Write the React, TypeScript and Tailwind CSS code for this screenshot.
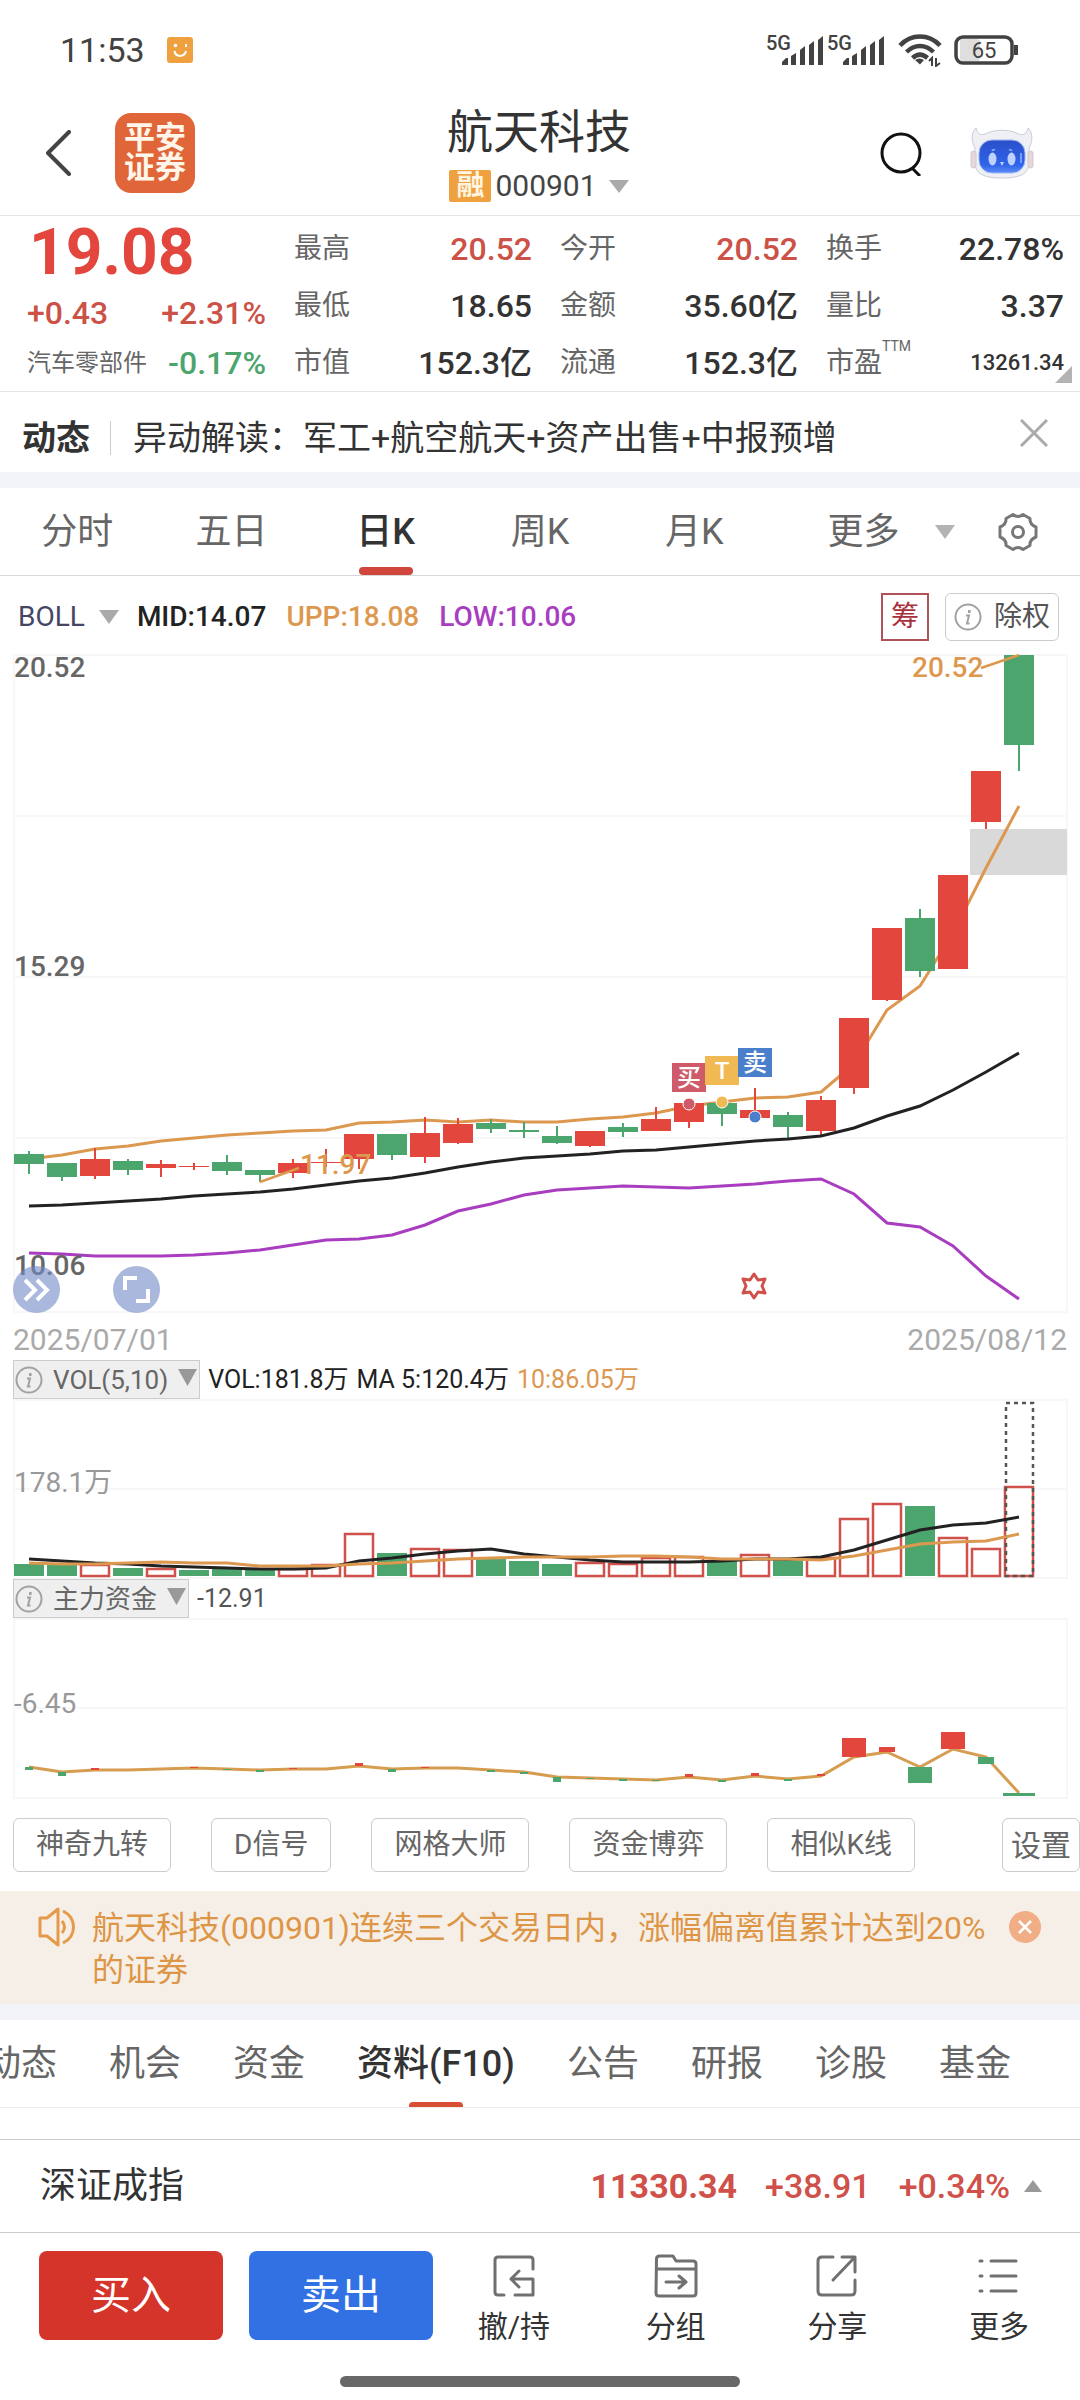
import { useState, type ReactNode } from "react";

const RED = "#e2463c";
const GREEN = "#4ca56d";
const ORANGE = "#dd9850";
const BLACK = "#222222";
const PURPLE = "#a93dc0";
const GRID = "#f7f7f8";

const STEP = 33;
const x = (i: number) => 29 + i * STEP;

// up, high, body top, body bottom, low
type Candle = [number, number, number, number, number];

const candles: Candle[] = [
  [0, 1151, 1154, 1164, 1174],
  [0, 1163, 1163, 1177, 1181],
  [1, 1148, 1159, 1176, 1179],
  [0, 1159, 1161, 1170, 1175],
  [1, 1160, 1164, 1168, 1177],
  [1, 1163, 1166, 1167, 1170],
  [0, 1155, 1162, 1171, 1175],
  [0, 1170, 1170, 1175, 1182],
  [1, 1159, 1163, 1173, 1178],
  [1, 1149, 1162, 1163, 1167],
  [1, 1134, 1134, 1159, 1169],
  [0, 1134, 1134, 1155, 1160],
  [1, 1117, 1133, 1157, 1163],
  [1, 1118, 1124, 1143, 1144],
  [0, 1119, 1123, 1129, 1133],
  [0, 1122, 1130, 1132, 1138],
  [0, 1126, 1136, 1143, 1144],
  [1, 1131, 1131, 1146, 1147],
  [0, 1123, 1127, 1132, 1137],
  [1, 1107, 1119, 1131, 1131],
  [1, 1103, 1103, 1122, 1128],
  [0, 1103, 1103, 1114, 1126],
  [1, 1088, 1110, 1118, 1118],
  [0, 1112, 1115, 1127, 1138],
  [1, 1096, 1100, 1131, 1135],
  [1, 1018, 1018, 1088, 1094],
  [1, 928, 928, 1000, 1001],
  [0, 909, 918, 971, 977],
  [1, 875, 875, 969, 969],
  [1, 771, 771, 822, 829],
  [0, 655, 655, 745, 771],
];

const upper = [
  1159, 1155, 1149, 1146, 1141, 1138, 1135, 1133, 1131, 1130, 1123, 1122, 1120,
  1122, 1120, 1122, 1122, 1119, 1117, 1113, 1106, 1102, 1098, 1097, 1092, 1064,
  1010, 986, 933, 868, 806,
];
const middle = [
  1206, 1205, 1203, 1201, 1199, 1196, 1194, 1192, 1189, 1185, 1181, 1178, 1173,
  1167, 1162, 1158, 1156, 1154, 1151, 1150, 1147, 1144, 1141, 1139, 1136, 1128,
  1116, 1106, 1090, 1072, 1053,
];
const lower = [
  1253, 1254, 1256, 1256, 1256, 1255, 1253, 1250, 1245, 1240, 1239, 1235, 1225,
  1211, 1204, 1195, 1190, 1188, 1186, 1187, 1188, 1186, 1184, 1181, 1179, 1194,
  1223, 1227, 1246, 1276, 1299,
];

// up, bar top
const volumes: [number, number][] = [
  [0, 1564], [0, 1565], [1, 1564], [0, 1568], [1, 1568], [0, 1570], [0, 1569],
  [0, 1570], [1, 1568], [1, 1564], [1, 1533], [0, 1553], [1, 1548], [1, 1549],
  [0, 1557], [0, 1561], [0, 1564], [1, 1562], [1, 1563], [1, 1557], [1, 1556],
  [0, 1561], [1, 1554], [0, 1559], [1, 1557], [1, 1518], [1, 1503], [0, 1506],
  [1, 1537], [1, 1548], [1, 1486],
];
const ma5 = [
  1559, 1561, 1563, 1564, 1566, 1567, 1568, 1569, 1569, 1568, 1561, 1558, 1554,
  1551, 1549, 1554, 1557, 1560, 1562, 1562, 1562, 1561, 1559, 1559, 1557, 1550,
  1540, 1530, 1525, 1523, 1517,
];
const ma10 = [
  1563, 1564, 1564, 1563, 1562, 1563, 1563, 1566, 1566, 1566, 1564, 1563, 1561,
  1559, 1558, 1557, 1557, 1557, 1556, 1556, 1557, 1559, 1559, 1559, 1560, 1556,
  1550, 1544, 1542, 1541, 1534,
];

const fund = [
  1767, 1772, 1770, 1770, 1769, 1768, 1769, 1770, 1769, 1769, 1766, 1769, 1768,
  1768, 1770, 1772, 1777, 1778, 1779, 1780, 1777, 1780, 1776, 1779, 1776, 1757,
  1752, 1767, 1749, 1757, 1793,
];
// index, up, top, height, width
const fundBars: [number, number, number, number, number][] = [
  [0, 0, 1767, 3, 8], [1, 0, 1772, 4, 8], [2, 1, 1768, 2, 8], [5, 1, 1767, 1, 8],
  [6, 0, 1769, 1, 8], [7, 0, 1770, 2, 8], [8, 1, 1768, 1, 8], [10, 1, 1763, 3, 8],
  [11, 0, 1769, 3, 8], [12, 1, 1767, 1, 8], [14, 0, 1770, 2, 8], [15, 0, 1772, 2, 8],
  [16, 0, 1777, 5, 8], [17, 0, 1778, 1, 8], [18, 0, 1779, 2, 8], [19, 0, 1780, 1, 8],
  [20, 1, 1774, 3, 8], [21, 0, 1780, 2, 8], [22, 1, 1773, 3, 8], [23, 0, 1779, 2, 8],
  [24, 1, 1774, 2, 8], [25, 1, 1738, 19, 24], [26, 1, 1747, 5, 16], [27, 0, 1767, 16, 24],
  [28, 1, 1732, 17, 24], [29, 0, 1757, 7, 16], [30, 0, 1793, 3, 32],
];

const toPoints = (ys: number[]) => ys.map((y, i) => `${x(i)},${y}`).join(" ");

function Line({ ys, color }: { ys: number[]; color: string }) {
  return <polyline points={toPoints(ys)} fill="none" stroke={color} strokeWidth="3" />;
}

function Caret({ className, up = false }: { className: string; up?: boolean }) {
  return (
    <svg viewBox="0 0 20 14" preserveAspectRatio="none" className={className} fill="currentColor">
      <path d={up ? "M0 14 10 0l10 14z" : "M0 0h20L10 14z"} />
    </svg>
  );
}

function InfoIcon() {
  return (
    <svg viewBox="0 0 28 28" className="h-7 w-7 shrink-0" fill="none" stroke="#a2a2a2" strokeWidth="2">
      <circle cx="14" cy="14" r="12.5" />
      <path d="M12 12.5h3l-2 8h2.5" />
      <path d="M15.3 7v3" strokeWidth="2.6" />
    </svg>
  );
}

function Signal() {
  return (
    <div className="flex items-start">
      <span className="-mr-2.5 text-[20px] font-medium leading-4">5G</span>
      <svg viewBox="0 0 44 30" className="h-[30px] w-11" fill="#424242">
        <path d="M1 30v-3l4-4h2v7zM10 30V21l5-3v12zM19 30V15l5-4v19zM28 30V10l5-4v24zM37 30V5l5-4v29z" />
      </svg>
    </div>
  );
}

function StatusBar() {
  return (
    <div className="flex h-[100px] items-center justify-between pl-[60px] pr-[60px] text-[#424242]">
      <div className="flex items-center gap-[22px]">
        <span className="text-[34px]">11:53</span>
        <svg viewBox="0 0 26 26" className="h-[26px] w-[26px]">
          <rect width="26" height="26" rx="3" fill="#efa03f" />
          <circle cx="8.5" cy="8.5" r="1.8" fill="#fff" />
          <path d="M19 7v3" stroke="#fff" strokeWidth="2" />
          <path d="M7.5 14c1 6.5 10 6.5 11.5 0" fill="none" stroke="#fff" strokeWidth="2" />
        </svg>
      </div>
      <div className="flex items-center gap-3">
        <div className="flex items-start gap-0.5">
          <Signal />
          <Signal />
        </div>
        <svg viewBox="0 0 44 34" className="h-[34px] w-11" fill="none" stroke="#424242" strokeWidth="4.5">
          <path d="M2 12.5C13 .5 31 .5 42 12.5" />
          <path d="M8.5 19c8-8 19-8 27 0" />
          <path d="M14.5 25c5-4.5 10-4.5 15 0" />
          <path d="m17 27 5 4.5 4-4.5c-3-2-6-2-9 0z" fill="#424242" stroke="none" />
          <path d="M34 33v-8l-3 3M38 25v8l4-3" strokeWidth="2" />
        </svg>
        <svg viewBox="0 0 66 30" className="h-[30px] w-[66px]">
          <rect x="6" y="4" width="20" height="22" rx="3" fill="#dedede" />
          <rect x="2" y="2" width="56" height="26" rx="7" fill="none" stroke="#424242" strokeWidth="3.5" />
          <path d="M62 10v10" stroke="#424242" strokeWidth="4" />
          <text x="30" y="23" textAnchor="middle" fontSize="22" fill="#424242">
            65
          </text>
        </svg>
      </div>
    </div>
  );
}

function Robot() {
  return (
    <svg viewBox="0 0 64 52" className="h-[52px] w-16">
      <defs>
        <linearGradient id="face" x1="0" y1="0" x2="0" y2="1">
          <stop offset="0" stopColor="#2b4fc9" />
          <stop offset="0.75" stopColor="#2f63ea" />
          <stop offset="1" stopColor="#5b8cf6" />
        </linearGradient>
      </defs>
      <g fill="#eef0f5" stroke="#c9ccd6" strokeWidth="1">
        <path d="M6 1c1 5 4 8 9 6 10-5 24-5 34 0 5 2 8-1 9-6 5 5 5 13 1 20v16c-1 10-9 14-27 14S6 47 5 37V21C1 14 1 6 6 1z" />
        <rect x="1" y="24" width="5" height="17" rx="2.5" fill="#e8d6d8" />
        <rect x="58" y="24" width="5" height="17" rx="2.5" fill="#e8d6d8" />
      </g>
      <rect x="9" y="13" width="46" height="33" rx="13" fill="url(#face)" stroke="#9fb6f3" />
      <ellipse cx="22.5" cy="32" rx="4" ry="6.5" fill="#bdd2ff" />
      <ellipse cx="41.5" cy="32" rx="4" ry="6.5" fill="#bdd2ff" />
      <path d="M22 24q1-2 3-1M39 23q2-1 3 1M51 26v10" fill="none" stroke="#8fb0ff" strokeWidth="1.5" />
      <path d="M30 35h4l-2 4z" fill="#bdd2ff" />
    </svg>
  );
}

function Header() {
  return (
    <header className="grid h-[116px] grid-cols-3 items-center border-b border-[#e6e6e6] pb-3 pl-11 pr-[46px]">
      <div className="flex items-center gap-11">
        <button aria-label="返回">
          <svg viewBox="0 0 27 46" className="h-[46px] w-[27px]" fill="none" stroke="#444" strokeWidth="4">
            <path d="M25 2 4 23l21 21" strokeLinejoin="round" strokeLinecap="round" />
          </svg>
        </button>
        <div className="grid h-20 w-20 place-content-center rounded-2xl bg-[#e0663a] text-[31px] font-bold leading-[30px] text-[#fff5e8]">
          <span>平安</span>
          <span>证券</span>
        </div>
      </div>
      <div className="flex flex-col items-center gap-1.5 self-start pt-1">
        <h1 className="text-[46px] leading-[56px] text-[#333]">航天科技</h1>
        <button className="flex items-center text-[30px] leading-10 text-[#444]">
          <span className="mr-1 rounded-[2px] bg-[#efa03f] px-[7px] text-[28px] font-bold leading-8 text-[#fff5e0]">
            融
          </span>
          000901
          <Caret className="ml-3 h-[13px] w-5 text-[#aaa]" />
        </button>
      </div>
      <div className="flex items-center justify-end gap-12">
        <button aria-label="搜索">
          <svg viewBox="0 0 42 46" className="h-[46px] w-[42px]" fill="none" stroke="#111" strokeWidth="3">
            <circle cx="21" cy="23" r="19" />
            <path d="m32 38 8 8" />
          </svg>
        </button>
        <button aria-label="智能助手">
          <Robot />
        </button>
      </div>
    </header>
  );
}

const quoteColumns = [
  [
    { label: "最高", value: "20.52", red: true },
    { label: "最低", value: "18.65" },
    { label: "市值", value: "152.3亿" },
  ],
  [
    { label: "今开", value: "20.52", red: true },
    { label: "金额", value: "35.60亿" },
    { label: "流通", value: "152.3亿" },
  ],
  [
    { label: "换手", value: "22.78%" },
    { label: "量比", value: "3.37" },
    { label: "市盈", value: "13261.34", small: true },
  ],
];

function Quote() {
  return (
    <section className="relative flex gap-7 border-b border-[#e6e6e6] pl-[27px] pr-4 pt-1">
      <div className="w-[239px] shrink-0">
        <div className="px-0.5 text-[64px] font-bold leading-[66px] text-[#e2463c]">19.08</div>
        <div className="flex h-[53px] items-center justify-between text-[32px] font-medium text-[#cc5146]">
          <span>+0.43</span>
          <span>+2.31%</span>
        </div>
        <div className="flex h-12 items-center justify-between text-[#4ca56d]">
          <span className="text-[24px] text-[#666]">汽车零部件</span>
          <span className="text-[32px] font-medium">-0.17%</span>
        </div>
      </div>
      <div className="grid flex-1 grid-cols-3 gap-7">
        {quoteColumns.map((col, i) => (
          <dl key={i}>
            {col.map((q) => (
              <div key={q.label} className="flex h-[57px] items-center justify-between">
                <dt className="relative text-[28px] text-[#666]">
                  {q.label}
                  {q.small && <sup className="absolute -top-1 left-full text-[14px] leading-4">TTM</sup>}
                </dt>
                <dd
                  className={
                    q.small
                      ? "text-[22px] font-medium text-[#333]"
                      : q.red
                        ? "text-[32px] font-medium text-[#cc5146]"
                        : "text-[32px] font-medium text-[#333]"
                  }
                >
                  {q.value}
                </dd>
              </div>
            ))}
          </dl>
        ))}
      </div>
      <svg viewBox="0 0 17 17" className="absolute bottom-2 right-2 h-[17px] w-[17px]" fill="#b3b3b3">
        <path d="M17 0v17H0z" />
      </svg>
    </section>
  );
}

function News() {
  const [open, setOpen] = useState(true);
  if (!open) return null;
  return (
    <section className="flex h-20 items-center pl-[22px] pr-8 pt-3 text-[34px] text-[#333]">
      <b>动态</b>
      <span className="ml-5 mr-[22px] h-[34px] w-px bg-[#ccc]" />
      <a href="#news" className="flex-1">
        异动解读：军工+航空航天+资产出售+中报预增
      </a>
      <button aria-label="关闭" onClick={() => setOpen(false)} className="pb-2.5">
        <svg viewBox="0 0 28 28" className="h-7 w-7" stroke="#aaa" strokeWidth="3">
          <path d="m1 1 26 26M27 1 1 27" />
        </svg>
      </button>
    </section>
  );
}

function PeriodTabs() {
  const [active, setActive] = useState("日K");
  return (
    <nav className="grid h-[88px] grid-cols-7 border-b border-[#d8d8d8] text-[36px] text-[#666]">
      {["分时", "五日", "日K", "周K", "月K"].map((name) => (
        <button
          key={name}
          onClick={() => setActive(name)}
          className={`relative ${name === active ? "font-medium text-[#333]" : ""}`}
        >
          {name}
          {name === active && (
            <span className="absolute bottom-0 left-1/2 h-2 w-[54px] -translate-x-1/2 rounded bg-[#d0453c]" />
          )}
        </button>
      ))}
      <div className="col-span-2 flex items-center justify-between pl-14 pr-[42px]">
        <button className="flex items-center gap-9">
          更多
          <Caret className="h-[14px] w-5 text-[#b3b3b3]" />
        </button>
        <button aria-label="图表设置">
          <svg viewBox="0 0 40 40" className="h-10 w-10" fill="none" stroke="#777" strokeWidth="3" strokeLinejoin="round">
            <path d="M15 2.5q5 4 10 0l7 4q-.5 6 6 8.5v10q-6.5 2.5-6 8.5l-7 4q-5-4-10 0l-7-4q.5-6-6-8.5V15q6.5-2.5 6-8.5z" />
            <circle cx="20" cy="20" r="5.5" />
          </svg>
        </button>
      </div>
    </nav>
  );
}

function BollRow() {
  return (
    <div className="flex h-[78px] items-center pl-[18px] pr-[21px] pt-1 text-[28px]">
      <button className="flex items-center gap-3.5 text-[#464664]">
        BOLL
        <Caret className="h-[14px] w-5 text-[#aaa]" />
      </button>
      <span className="ml-[18px] font-medium text-[#222]">MID:14.07</span>
      <span className="ml-5 font-medium text-[#dd9850]">UPP:18.08</span>
      <span className="ml-5 flex-1 font-medium text-[#a93dc0]">LOW:10.06</span>
      <button className="h-12 w-12 border-2 border-[#b0525a] leading-10 text-[#a8313b]">筹</button>
      <button className="ml-4 flex h-12 items-center gap-3 rounded-md border border-[#ccc] px-2 text-[#555]">
        <InfoIcon />
        除权
      </button>
    </div>
  );
}

type MarkerProps = { left: number; top: number; dotY: number; color: string; text: string };

function Marker({ left, top, dotY, color, text }: MarkerProps) {
  return (
    <g>
      <rect x={left} y={top} width="34" height="29" fill={color} />
      <text x={left + 17} y={top + 23} textAnchor="middle" fontSize="24" fontWeight="500" fill="#fff">
        {text}
      </text>
      <circle cx={left + 17} cy={dotY} r="6" fill={color} stroke="#fff" strokeWidth="1" />
    </g>
  );
}

function KLineChart() {
  return (
    <div className="relative">
      <svg viewBox="0 654 1080 659" className="block h-auto w-full overflow-visible" fontSize="28" fontWeight="500">
        <g fill="none" stroke={GRID} strokeWidth="2">
          <rect x="14" y="655" width="1053" height="657" />
          <path d="M14 816h1053M14 977h1053M14 1138h1053" />
        </g>
        <rect x="970" y="829" width="97" height="46" fill="#d9d9d9" />
        <Line ys={upper} color={ORANGE} />
        {candles.map(([up, high, top, bottom, low], i) => (
          <g key={i} fill={up ? RED : GREEN}>
            <rect x={x(i) - 1} y={high} width="2" height={low - high} />
            <rect x={x(i) - 15} y={top} width="30" height={bottom - top} />
          </g>
        ))}
        <Line ys={middle} color={BLACK} />
        <Line ys={lower} color={PURPLE} />
        <g fill="#666">
          <text x="14" y="677">20.52</text>
          <text x="14" y="976">15.29</text>
          <text x="14" y="1275">10.06</text>
        </g>
        <g fill={ORANGE}>
          <text x="912" y="677">20.52</text>
          <text x="300" y="1174">11.97</text>
          <path d="m260 1182 39-14M981 668l38-13" stroke={ORANGE} strokeWidth="2.5" />
        </g>
        <Marker left={672} top={1063} dotY={1104} color="#cf5a69" text="买" />
        <Marker left={705} top={1056} dotY={1102} color="#f1b953" text="T" />
        <Marker left={738} top={1048} dotY={1117} color="#4a80cb" text="卖" />
        <path
          d="m754 1274 4 6 7-1-3 7 3 7-7-1-4 6-4-6-7 1 3-7-3-7 7 1z"
          fill="none"
          stroke="#d0504a"
          strokeWidth="3"
          strokeLinejoin="round"
        />
      </svg>
      <div className="absolute bottom-0 left-[13px] flex gap-[53px]">
        <button aria-label="展开" className="h-[47px] w-[47px] rounded-full bg-[#7088c4]/60">
          <svg viewBox="0 0 47 47" fill="none" stroke="#fff" strokeWidth="4">
            <path d="m12 14 10 10-10 10M24 14l10 10-10 10" />
          </svg>
        </button>
        <button aria-label="全屏" className="h-[47px] w-[47px] rounded-full bg-[#7088c4]/60">
          <svg viewBox="0 0 47 47" fill="none" stroke="#fff" strokeWidth="4">
            <path d="M12 24V12h12M35 23v12H23" />
          </svg>
        </button>
      </div>
    </div>
  );
}

function IndicatorRow({ name, children }: { name: string; children: ReactNode }) {
  return (
    <div className="flex h-[39px] items-center gap-2 pl-[13px] text-[25px] leading-9">
      <button className="flex h-full items-center gap-2.5 border border-[#ccc] bg-[#efefef] pl-px pr-0.5 text-[26px] text-[#666]">
        <InfoIcon />
        {name}
        <Caret className="mb-1 h-[17px] w-[19px] text-[#999]" />
      </button>
      {children}
    </div>
  );
}

function VolumeChart() {
  return (
    <svg viewBox="0 1399 1080 180" className="block h-auto w-full" fontSize="28">
      <g fill="none" stroke={GRID} strokeWidth="2">
        <rect x="14" y="1400" width="1053" height="178" />
        <path d="M14 1489h1053" />
      </g>
      {volumes.map(([up, top], i) =>
        up ? (
          <rect
            key={i}
            x={x(i) - 14}
            y={top + 1}
            width="28"
            height={1575 - top}
            fill="#fff"
            stroke="#d0504a"
            strokeWidth="2.5"
          />
        ) : (
          <rect key={i} x={x(i) - 15} y={top} width="30" height={1576 - top} fill={GREEN} />
        )
      )}
      <rect x="1006" y="1403" width="27" height="173" fill="none" stroke="#555" strokeWidth="2.5" strokeDasharray="4 4" />
      <Line ys={ma5} color={BLACK} />
      <Line ys={ma10} color={ORANGE} />
      <text x="14" y="1492" fill="#999">178.1万</text>
    </svg>
  );
}

function FundChart() {
  return (
    <svg viewBox="0 1618 1080 181" className="block h-auto w-full" fontSize="28">
      <g fill="none" stroke={GRID} strokeWidth="2">
        <rect x="14" y="1619" width="1053" height="179" />
        <path d="M14 1708h1053" />
      </g>
      <Line ys={fund} color="#d69c4f" />
      {fundBars.map(([i, up, top, h, w]) => (
        <rect key={i} x={x(i) - w / 2} y={top} width={w} height={h} fill={up ? RED : GREEN} />
      ))}
      <text x="14" y="1713" fill="#999">-6.45</text>
    </svg>
  );
}

function Tools() {
  return (
    <div className="flex gap-10 overflow-hidden py-[19px] pl-[13px] text-[28px] text-[#666]">
      {["神奇九转", "D信号", "网格大师", "资金博弈", "相似K线"].map((name) => (
        <button key={name} className="h-[54px] shrink-0 rounded-md border border-[#ccc] px-[22px]">
          {name}
        </button>
      ))}
      <button className="ml-auto h-[54px] shrink-0 rounded-md border border-[#ccc] px-2 text-[30px]">
        设置
      </button>
    </div>
  );
}

function Alert() {
  const [open, setOpen] = useState(true);
  if (!open) return null;
  return (
    <section className="flex items-start bg-[#f6efe8] pb-[13px] pl-[38px] pr-[39px] pt-4 text-[#dd9546]">
      <svg viewBox="0 0 38 40" className="h-10 w-[38px] shrink-0" fill="none" stroke="#e59a4a" strokeWidth="3" strokeLinejoin="round">
        <path d="M20 2v36L9 29H2V11h7z" />
        <path d="M24 14q5 6 0 12M25 4c14 7 14 25 0 32" />
      </svg>
      <p className="ml-4 flex-1 text-[32px] leading-[42px]">
        航天科技(000901)连续三个交易日内，涨幅偏离值累计达到20%的证券
      </p>
      <button aria-label="关闭提示" onClick={() => setOpen(false)} className="mt-1">
        <svg viewBox="0 0 32 32" className="h-8 w-8">
          <circle cx="16" cy="16" r="16" fill="#f0ad86" />
          <path d="m10 10 12 12M22 10 10 22" stroke="#fff" strokeWidth="2.5" />
        </svg>
      </button>
    </section>
  );
}

function InfoTabs() {
  const [active, setActive] = useState("资料(F10)");
  return (
    <nav className="flex h-[88px] justify-center gap-[52px] overflow-hidden border-b border-[#eee] pr-[84px] text-[36px] text-[#666]">
      {["动态", "机会", "资金", "资料(F10)", "公告", "研报", "诊股", "基金"].map((name) => (
        <button
          key={name}
          onClick={() => setActive(name)}
          className={`relative shrink-0 ${name === active ? "font-medium text-[#333]" : ""}`}
        >
          {name}
          {name === active && (
            <span className="absolute bottom-0 left-1/2 h-[5px] w-[54px] -translate-x-1/2 rounded-t bg-[#d94f33]" />
          )}
        </button>
      ))}
    </nav>
  );
}

function IndexRow() {
  return (
    <a
      href="#index"
      className="mt-[31px] flex h-[94px] items-center border-y border-[#ccc] pl-10 pr-[38px] text-[34px] font-medium text-[#d0504a]"
    >
      <span className="flex-1 text-[36px] font-normal text-[#333]">深证成指</span>
      <b>11330.34</b>
      <span className="ml-7">+38.91</span>
      <span className="ml-7">+0.34%</span>
      <Caret up className="ml-3.5 h-3 w-[18px] text-[#999]" />
    </a>
  );
}

const actions = [
  {
    label: "撤/持",
    icon: (
      <>
        <path d="M40 14V5q0-3-3-3H5Q2 2 2 5v32q0 3 3 3h6" />
        <path d="M22 40h18V24H18m8-8-8 8 8 8" />
      </>
    ),
  },
  {
    label: "分组",
    icon: (
      <>
        <path d="M1.5 4q0-3 3-3H18l3 5h17q3 0 3 3v29q0 3-3 3h-34q-3 0-3-3zM2 14h38" />
        <path d="M11 27h20m-7-6 7 6-7 6" />
      </>
    ),
  },
  {
    label: "分享",
    icon: (
      <>
        <path d="M17 2H6Q2 2 2 6v30q0 4 4 4h29q4 0 4-4V25" />
        <path d="M26 2h13v15M38 3 17 25" />
      </>
    ),
  },
  {
    label: "更多",
    icon: <path d="M2 6h2M13 6h25M2 21h2M13 21h25M2 36h2M13 36h25" />,
  },
];

function BottomBar() {
  return (
    <footer className="flex pb-[29px] pl-[39px] pt-[18px]">
      <div className="flex gap-[26px] text-[40px] text-white">
        <button className="h-[89px] w-[184px] rounded-lg bg-[#d5342b]">买入</button>
        <button className="h-[89px] w-[184px] rounded-lg bg-[#3271e4]">卖出</button>
      </div>
      <div className="grid flex-1 grid-cols-4">
        {actions.map((a) => (
          <button key={a.label} className="flex flex-col items-center gap-2.5 pt-1 text-[30px] leading-10 text-[#333]">
            <svg viewBox="0 0 42 42" className="h-[42px] w-[42px] overflow-visible" fill="none" stroke="#707070" strokeWidth="3" strokeLinecap="round" strokeLinejoin="round">
              {a.icon}
            </svg>
            {a.label}
          </button>
        ))}
      </div>
    </footer>
  );
}

export default function App() {
  return (
    <div className="bg-white font-['Roboto','Noto_Sans_CJK_SC',sans-serif]">
      <StatusBar />
      <Header />
      <Quote />
      <News />
      <div className="h-4 bg-[#f2f4f9]" />
      <PeriodTabs />
      <BollRow />
      <KLineChart />
      <div className="flex h-[47px] justify-between pl-[13px] pr-[13px] pt-1 text-[30px] leading-[45px] text-[#aaa]">
        <span>2025/07/01</span>
        <span>2025/08/12</span>
      </div>
      <IndicatorRow name="VOL(5,10)">
        <span className="text-[#222]">VOL:181.8万</span>
        <span className="text-[#222]">MA 5:120.4万</span>
        <span className="text-[#dd9850]">10:86.05万</span>
      </IndicatorRow>
      <VolumeChart />
      <IndicatorRow name="主力资金">
        <span className="text-[#555]">-12.91</span>
      </IndicatorRow>
      <FundChart />
      <Tools />
      <Alert />
      <div className="h-4 bg-[#f2f4f9]" />
      <InfoTabs />
      <IndexRow />
      <BottomBar />
      <div className="mx-auto mb-4 h-[11px] w-[400px] rounded-full bg-[#686868]" />
    </div>
  );
}
